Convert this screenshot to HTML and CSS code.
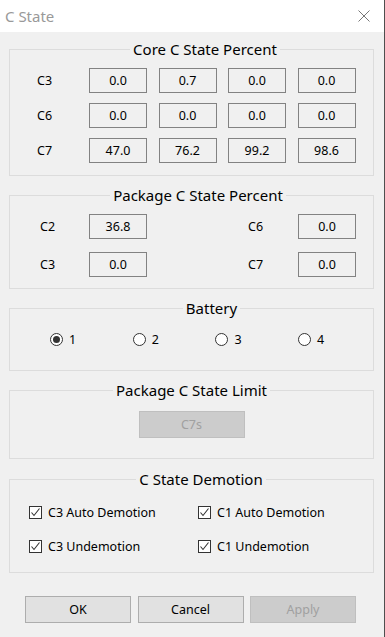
FILE: index.html
```html
<!DOCTYPE html>
<html lang="en">
<head>
    <meta charset="UTF-8">
    <meta name="viewport" content="width=device-width, initial-scale=1.0">
    <title>C State</title>
    <link rel="stylesheet" href="styles.css">
</head>
<body>
    <div class="window">
        <div class="titlebar">
            <span class="title">C State</span>
            <span class="close">
                <svg width="12" height="12" viewBox="0 0 12 12"><path d="M0.5 0.5L11.5 11.5M11.5 0.5L0.5 11.5" stroke="#777" stroke-width="1" fill="none"/></svg>
            </span>
        </div>

        <fieldset class="group core">
            <legend>Core C State Percent</legend>
            <div class="core-grid">
                <span class="lbl">C3</span>
                <span class="val">0.0</span>
                <span class="val">0.7</span>
                <span class="val">0.0</span>
                <span class="val">0.0</span>
                <span class="lbl">C6</span>
                <span class="val">0.0</span>
                <span class="val">0.0</span>
                <span class="val">0.0</span>
                <span class="val">0.0</span>
                <span class="lbl">C7</span>
                <span class="val">47.0</span>
                <span class="val">76.2</span>
                <span class="val">99.2</span>
                <span class="val">98.6</span>
            </div>
        </fieldset>

        <fieldset class="group package">
            <legend>Package C State Percent</legend>
            <div class="pkg-grid">
                <span class="lbl">C2</span>
                <span class="val">36.8</span>
                <span></span>
                <span class="lbl">C6</span>
                <span class="val">0.0</span>
                <span class="lbl">C3</span>
                <span class="val">0.0</span>
                <span></span>
                <span class="lbl">C7</span>
                <span class="val">0.0</span>
            </div>
        </fieldset>

        <fieldset class="group battery">
            <legend>Battery</legend>
            <div class="radios">
                <label class="radio"><span class="dot checked"></span>1</label>
                <label class="radio"><span class="dot"></span>2</label>
                <label class="radio"><span class="dot"></span>3</label>
                <label class="radio"><span class="dot"></span>4</label>
            </div>
        </fieldset>

        <fieldset class="group limit">
            <legend>Package C State Limit</legend>
            <div class="limit-row">
                <span class="btn disabled">C7s</span>
            </div>
        </fieldset>

        <fieldset class="group demotion">
            <legend>C State Demotion</legend>
            <div class="checks">
                <label class="check"><span class="box"><svg width="11" height="11" viewBox="0 0 11 11"><path d="M1.5 5.5L4 8.5L9.5 1.5" stroke="#333" stroke-width="1.1" fill="none"/></svg></span>C3 Auto Demotion</label>
                <label class="check"><span class="box"><svg width="11" height="11" viewBox="0 0 11 11"><path d="M1.5 5.5L4 8.5L9.5 1.5" stroke="#333" stroke-width="1.1" fill="none"/></svg></span>C1 Auto Demotion</label>
                <label class="check"><span class="box"><svg width="11" height="11" viewBox="0 0 11 11"><path d="M1.5 5.5L4 8.5L9.5 1.5" stroke="#333" stroke-width="1.1" fill="none"/></svg></span>C3 Undemotion</label>
                <label class="check"><span class="box"><svg width="11" height="11" viewBox="0 0 11 11"><path d="M1.5 5.5L4 8.5L9.5 1.5" stroke="#333" stroke-width="1.1" fill="none"/></svg></span>C1 Undemotion</label>
            </div>
        </fieldset>

        <div class="buttons">
            <span class="btn">OK</span>
            <span class="btn">Cancel</span>
            <span class="btn disabled">Apply</span>
        </div>
    </div>
</body>
</html>
```

FILE: styles.css
```css
* {
    box-sizing: border-box;
}
html, body {
    margin: 0;
    height: 100%;
}
body {
    background-color: #4e4e4e;
    font-family: "Noto Sans", "Open Sans", sans-serif;
    font-size: 12.5px;
    color: #000;
}
.window {
    width: 384px;
    height: 637px;
    background-color: #f0f0f0;
    overflow: hidden;
}
.titlebar {
    height: 32px;
    background-color: #fff;
    display: flex;
    align-items: center;
    justify-content: space-between;
    padding-left: 5px;
}
.title {
    font-size: 15px;
    color: #999;
}
.close {
    width: 40px;
    height: 32px;
    display: flex;
    align-items: center;
    justify-content: center;
}

/* group boxes */
.group {
    margin: 9px 10px 0 9px;
    border: 1px solid #dcdcdc;
    min-width: 0;
}
.group legend {
    margin: 0 auto;
    padding: 0 3px;
    font-size: 15px;
    line-height: 20px;
}
.core {
    margin-top: 7px;
    padding: 9px 0 12px 27px;
}
.package {
    padding: 9px 17px 11px 30px;
}
.battery {
    padding: 13px 0 23px 40px;
}
.limit {
    padding: 11px 0 20px 0;
}
.demotion {
    margin-top: 10px;
    padding: 16px 0 19px 19px;
}

.lbl {
    line-height: 25px;
}
.val {
    height: 25px;
    border: 1px solid #828282;
    display: flex;
    align-items: center;
    justify-content: center;
}
.core-grid {
    display: grid;
    grid-template-columns: 40.5px repeat(4, 58px);
    column-gap: 11.5px;
    row-gap: 10px;
}
.pkg-grid {
    display: grid;
    grid-template-columns: 49px 58px 1fr 50px 58px;
    row-gap: 13px;
}

/* radios */
.radios {
    display: grid;
    grid-template-columns: repeat(4, 82.7px);
}
.radio {
    display: flex;
    align-items: center;
    height: 16px;
    gap: 6px;
}
.dot {
    width: 13px;
    height: 13px;
    border: 1px solid #333;
    border-radius: 50%;
    background-color: #fff;
    display: flex;
    align-items: center;
    justify-content: center;
}
.dot.checked::after {
    content: "";
    width: 7px;
    height: 7px;
    border-radius: 50%;
    background-color: #333;
}

/* buttons */
.limit-row {
    display: flex;
    justify-content: center;
}
.btn {
    width: 106px;
    height: 27px;
    background-color: #e1e1e1;
    border: 1px solid #adadad;
    display: flex;
    align-items: center;
    justify-content: center;
}
.btn.disabled {
    background-color: #cccccc;
    border-color: #bfbfbf;
    color: #a0a0a0;
}
.buttons {
    display: flex;
    gap: 6.5px;
    margin-top: 23px;
    padding-left: 25px;
}

/* checkboxes */
.checks {
    display: grid;
    grid-template-columns: 169px 1fr;
    row-gap: 20px;
}
.check {
    display: flex;
    align-items: center;
    height: 14px;
    gap: 6px;
}
.box {
    width: 13px;
    height: 13px;
    border: 1px solid #333;
    background-color: #fff;
    display: flex;
    align-items: center;
    justify-content: center;
}
```
